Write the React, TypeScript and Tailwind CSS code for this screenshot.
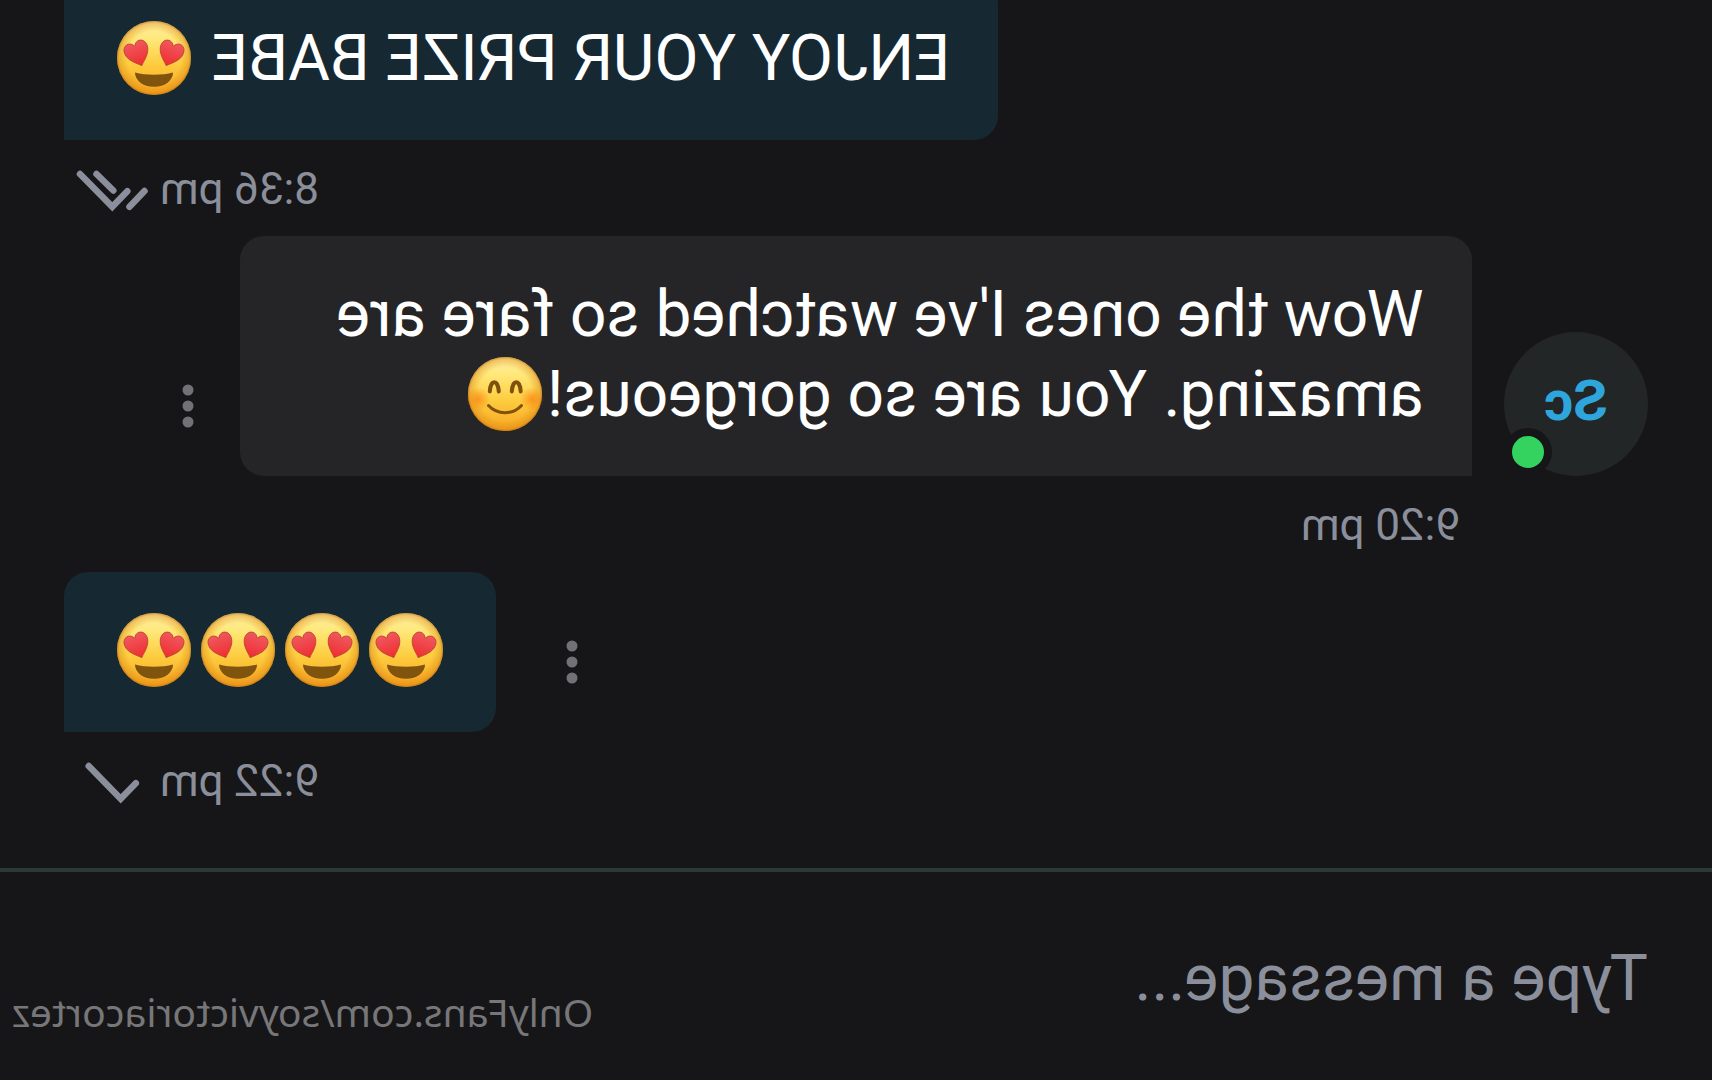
import { useId } from "react"

type Message = {
    id: number
    from: "me" | "them"
    text?: string
    emoji?: ("love" | "smile")[]
    time: string
    status?: "read" | "sent"
    menu: boolean
}

const messages: Message[] = [
    { id: 1, from: "me", text: "ENJOY YOUR PRIZE BABE ", emoji: ["love"], time: "8:36 pm", status: "read", menu: false },
    { id: 2, from: "them", text: "Wow the ones I've watched so fare are amazing. You are so gorgeous!", emoji: ["smile"], time: "9:20 pm", menu: true },
    { id: 3, from: "me", emoji: ["love", "love", "love", "love"], time: "9:22 pm", status: "sent", menu: true },
]

const heart = "M0 14C-3.5 10 -12 5 -12 -3.5C-12 -11.5 -3 -13.5 0 -6.5C3 -13.5 12 -11.5 12 -3.5C12 5 3.5 10 0 14Z"

const Emoji = (props: { kind: "love" | "smile" }) => {
    const id = useId()
    return (
        <svg className="inline-block w-[84px] h-[76px] align-[-16px]" viewBox="0 0 84 76" role="img" aria-label={props.kind === "love" ? "😍" : "😊"}>
            <defs>
                <linearGradient id={id + "face"} x1="0" y1="0" x2="0" y2="1">
                    <stop offset="0" stopColor="#fff0a4" />
                    <stop offset="0.25" stopColor="#ffe778" />
                    <stop offset="0.6" stopColor="#fdcb3e" />
                    <stop offset="1" stopColor="#f8a522" />
                </linearGradient>
                <radialGradient id={id + "edge"}>
                    <stop offset="0.72" stopColor="#d9800c" stopOpacity="0" />
                    <stop offset="0.94" stopColor="#d9800c" stopOpacity="0.4" />
                    <stop offset="1" stopColor="#b0600a" stopOpacity="0.65" />
                </radialGradient>
                <radialGradient id={id + "cheek"}>
                    <stop offset="0" stopColor="#f9780a" stopOpacity="0.65" />
                    <stop offset="1" stopColor="#f9780a" stopOpacity="0" />
                </radialGradient>
                <linearGradient id={id + "heart"} x1="0" y1="0" x2="0" y2="1">
                    <stop offset="0" stopColor="#f0585f" />
                    <stop offset="1" stopColor="#ee2c30" />
                </linearGradient>
            </defs>
            <circle cx="42" cy="38" r="37" fill={`url(#${id}face)`} />
            <circle cx="42" cy="38" r="37" fill={`url(#${id}edge)`} />
            {props.kind === "love" ? (
                <>
                    <g fill={`url(#${id}heart)`} stroke="#b8452a" strokeWidth="0.8">
                        <path d={heart} transform="translate(25 32.5) rotate(-20)" />
                        <path d={heart} transform="translate(59 32.5) rotate(20)" />
                    </g>
                    <path d="M23 52.5C33 55.5 51 55.5 61 52.5C61 60.5 53 66.8 42 66.8C31 66.8 23 60.5 23 52.5Z" fill="#80530f" />
                </>
            ) : (
                <>
                    <circle cx="15" cy="43" r="12" fill={`url(#${id}cheek)`} />
                    <circle cx="69" cy="43" r="12" fill={`url(#${id}cheek)`} />
                    <g fill="none" stroke="#80510c" strokeLinecap="round">
                        <path d="M26.3 35.5C27 23 34.5 23 35.2 35.5M48.2 35.5C49 23 56.5 23 57.2 35.5" strokeWidth="4" />
                        <path d="M25.5 49.5C34 59 50 59 58.5 49.5" strokeWidth="3" />
                    </g>
                </>
            )}
        </svg>
    )
}

const Status = (props: { status: "read" | "sent" }) => {
    return (
        <svg className="w-20 h-12" viewBox="0 0 80 48" fill="none" stroke="currentColor" strokeWidth="6.5" strokeLinecap="round" role="img" aria-label={props.status}>
            {props.status === "read" ? (
                <path d="M72 9L39.7 41.8L24.7 26.2M55.5 9L38.7 25.5M22.5 41.8L7.5 26" />
            ) : (
                <path d="M63.3 9L31.3 41.8L16.2 26.2" />
            )}
        </svg>
    )
}

const MenuButton = () => {
    return (
        <button type="button" aria-label="Message options" className="flex flex-none items-center justify-center w-14 h-[140px] text-[#707276]">
            <svg className="w-3 h-11" viewBox="0 0 12 44" fill="currentColor" aria-hidden="true">
                <circle cx="6" cy="6" r="5.5" />
                <circle cx="6" cy="22" r="5.5" />
                <circle cx="6" cy="38" r="5.5" />
            </svg>
        </button>
    )
}

const Avatar = () => {
    return (
        <div className="relative flex flex-none items-center justify-center w-36 h-36 pb-1.5 mr-8 rounded-full bg-[#232627] text-[56px] leading-[64px] font-bold text-[#2ea5dd]">
            Sc
            <span className="absolute right-0 bottom-0 w-12 h-12 rounded-full border-8 border-[#161618] bg-[#34d25f]"></span>
        </div>
    )
}

const Bubble = (props: { message: Message }) => {
    const { message } = props
    return (
        <p className={`px-12 pt-[39px] pb-[41px] rounded-3xl text-[64px] leading-[80px] text-white ${message.from === "me" ? "rounded-br-none bg-[#162831]" : "flex-1 rounded-bl-none bg-[#252527]"}`}>
            {message.text}
            {message.emoji?.map((kind, i) => <Emoji key={i} kind={kind} />)}
        </p>
    )
}

const MessageRow = (props: { message: Message }) => {
    const { message } = props
    if (message.from === "me") {
        return (
            <li>
                <div className="flex items-end justify-end gap-12 pl-16 pr-16">
                    {message.menu && <MenuButton />}
                    <Bubble message={message} />
                </div>
                <div className="flex items-center justify-end gap-2 h-24 pt-0.5 pr-[72px] text-[44px] text-[#8b8f9b]">
                    <time>{message.time}</time>
                    {message.status && <Status status={message.status} />}
                </div>
            </li>
        )
    }
    return (
        <li>
            <div className="flex items-end pl-16 pr-[136px]">
                <Avatar />
                <Bubble message={message} />
                <div className="flex px-6">
                    <MenuButton />
                </div>
            </div>
            <div className="flex items-center h-24 pt-0.5 pl-[252px] text-[44px] text-[#8b8f9b]">
                <time>{message.time}</time>
            </div>
        </li>
    )
}

export default function App() {
    return (
        <main className="flex flex-col min-h-screen overflow-hidden -scale-x-100 bg-[#161618] font-['Roboto',sans-serif]">
            <ul className="-mt-5 pb-10">
                {messages.map((m) => <MessageRow key={m.id} message={m} />)}
            </ul>
            <form className="flex flex-1 items-start pl-16 pr-3 border-t-4 border-[#2c3836]">
                <input
                    id="message"
                    type="text"
                    aria-label="Type a message"
                    className="flex-1 min-w-0 h-20 mt-[67px] bg-transparent text-[64px] leading-[80px] text-white placeholder:text-[#8b8f9b] focus:outline-none"
                    placeholder="Type a message..."
                />
                <a href="#profile" className="flex-none mt-[116px] font-['Noto_Sans',sans-serif] text-[39px] leading-[48px] text-[#77777a]">OnlyFans.com/soyvictoriacortez</a>
            </form>
        </main>
    )
}
